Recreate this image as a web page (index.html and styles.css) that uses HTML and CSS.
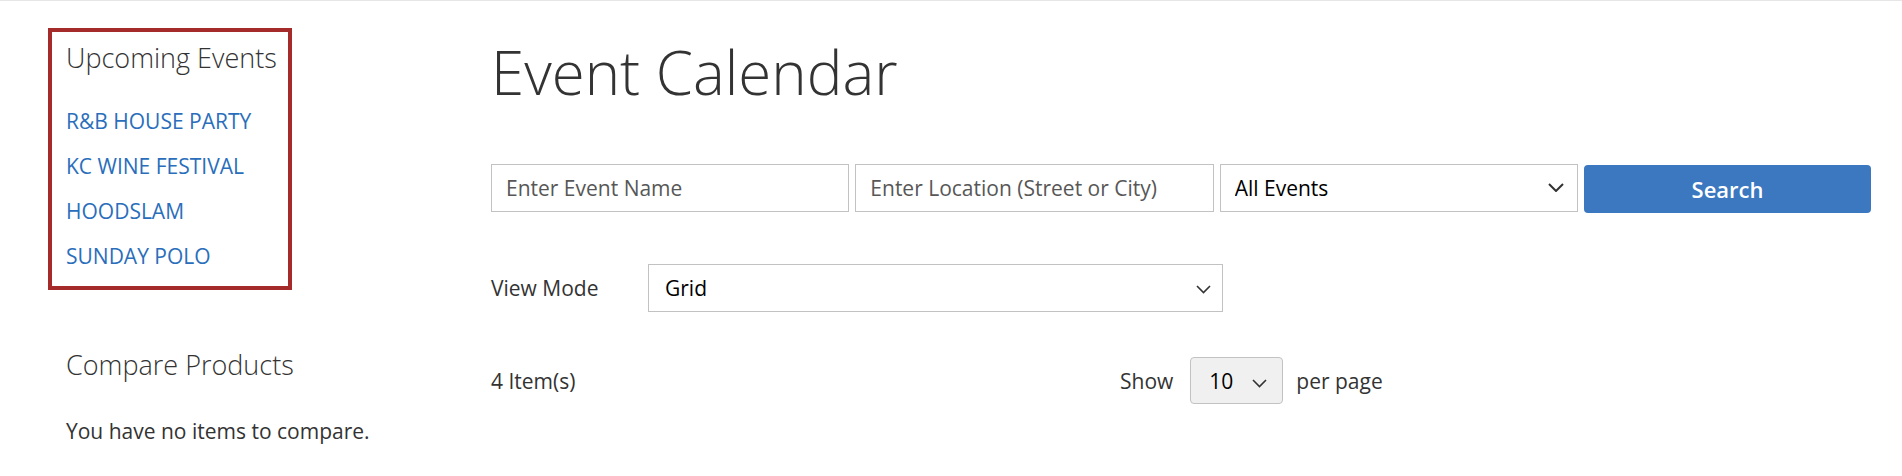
FILE: index.html
```html
<!DOCTYPE html>
<html lang="en">
<head>
<meta charset="utf-8">
<title>Event Calendar</title>
<link rel="stylesheet" href="styles.css">
</head>
<body>
<div class="page">
  <aside class="sidebar">
    <div class="block-events">
      <h2 class="block-title">Upcoming Events</h2>
      <ul class="event-list">
        <li><a href="#">R&amp;B HOUSE PARTY</a></li>
        <li><a href="#">KC WINE FESTIVAL</a></li>
        <li><a href="#">HOODSLAM</a></li>
        <li><a href="#">SUNDAY POLO</a></li>
      </ul>
    </div>
    <div class="block-compare">
      <h2 class="block-title compare-title">Compare Products</h2>
      <p class="empty">You have no items to compare.</p>
    </div>
  </aside>
  <main class="main">
    <h1 class="page-title">Event Calendar</h1>
    <form class="search-row">
      <input class="field search-field" type="text" placeholder="Enter Event Name">
      <input class="field search-field" type="text" placeholder="Enter Location (Street or City)">
      <div class="select-wrap">
        <select class="field search-field select"><option>All Events</option></select>
        <svg class="chev chev-bold" width="16" height="9" viewBox="0 0 16 9"><path d="M1 1l7 7 7-7" fill="none" stroke="#333" stroke-width="2"/></svg>
      </div>
      <button class="btn" type="button">Search</button>
    </form>
    <div class="view-row">
      <label class="view-label">View Mode</label>
      <div class="select-wrap view-select">
        <select class="field select"><option>Grid</option></select>
        <svg class="chev chev-thin" width="15" height="9" viewBox="0 0 15 9"><path d="M1 1l6.5 6.5L14 1" fill="none" stroke="#333" stroke-width="1.6"/></svg>
      </div>
    </div>
    <div class="toolbar">
      <span class="amount">4 Item(s)</span>
      <div class="limiter">
        <span>Show</span>
        <div class="select-wrap limit-select">
          <select class="select limit"><option>10</option></select>
          <svg class="chev chev-limit" width="15" height="9" viewBox="0 0 15 9"><path d="M1 1l6.5 6.5L14 1" fill="none" stroke="#333" stroke-width="1.6"/></svg>
        </div>
        <span>per page</span>
      </div>
    </div>
  </main>
</div>
</body>
</html>
```
FILE: styles.css
```css
* { box-sizing: border-box; }
html, body { margin: 0; padding: 0; background: #fff; }
body {
  font-family: "Open Sans", "Liberation Sans", sans-serif;
  color: #333;
  font-size: 21px;
  border-top: 1px solid #e6e6e6;
}
.page {
  display: flex;
  padding-left: 48px;
}
.sidebar {
  width: 244px;
  flex: none;
}
.block-events {
  margin-top: 27px;
  border: 4px solid #a52a2a;
  padding: 8px 10px 7px 14px;
}
.block-title {
  margin: 0;
  font-size: 27px;
  line-height: 36px;
  font-weight: 300;
  color: #333;
  white-space: nowrap;
}
.event-list {
  list-style: none;
  margin: 23px 0 0;
  padding: 0;
}
.event-list li {
  font-size: 21px;
  line-height: 45px;
}
.event-list a {
  color: #2a6ebb;
  text-decoration: none;
}
.block-compare {
  margin-top: 57px;
  padding-left: 18px;
}
.compare-title {
  font-size: 27px;
}
.empty {
  margin: 33px 0 0;
  font-size: 21px;
  line-height: 30px;
  white-space: nowrap;
}
.main {
  margin-left: 199px;
  width: 1380px;
}
.page-title {
  margin: 31px 0 0;
  font-size: 60px;
  line-height: 80px;
  font-weight: 300;
  color: #333;
}
.search-row {
  margin-top: 52px;
  display: grid;
  grid-template-columns: 1fr 1fr 1fr 287px;
  gap: 6px;
  align-items: start;
}
.field {
  height: 48px;
  width: 100%;
  border: 1px solid #c2c2c2;
  background: #fff;
  font-family: "Open Sans", "Liberation Sans", sans-serif;
  font-size: 21px;
  padding: 0 16px;
  color: #000;
  border-radius: 0;
  outline: none;
}
.search-field { padding: 0 14px; }
.field::placeholder { color: #575757; }
.select-wrap { position: relative; }
.select {
  appearance: none;
  -webkit-appearance: none;
  cursor: pointer;
}
.chev {
  position: absolute;
  top: 50%;
  pointer-events: none;
}
.chev-bold { right: 14px; margin-top: -5px; }
.chev-thin { right: 12px; margin-top: -3px; }
.btn {
  height: 48px;
  margin-top: 1px;
  border: none;
  border-radius: 4px;
  background: #3b78bf;
  color: #fff;
  font-family: "Open Sans", "Liberation Sans", sans-serif;
  font-size: 22px;
  font-weight: 600;
}
.view-row {
  margin-top: 51px;
  display: flex;
  align-items: center;
}
.view-label {
  width: 157px;
  font-size: 21px;
}
.view-select { width: 575px; }
.toolbar {
  margin-top: 45px;
  display: flex;
  align-items: center;
}
.amount {
  width: 629px;
  font-size: 21px;
}
.limiter {
  display: flex;
  align-items: center;
  font-size: 21px;
}
.limit-select {
  margin: 0 13px 0 17px;
  width: 93px;
}
.limit {
  width: 93px;
  height: 47px;
  border: 1px solid #c2c2c2;
  border-radius: 4px;
  background: #f0f0f0;
  font-family: "Open Sans", "Liberation Sans", sans-serif;
  font-size: 21px;
  color: #000;
  padding: 0 18px;
}
.chev-limit { right: 16px; margin-top: -2px; }
```
